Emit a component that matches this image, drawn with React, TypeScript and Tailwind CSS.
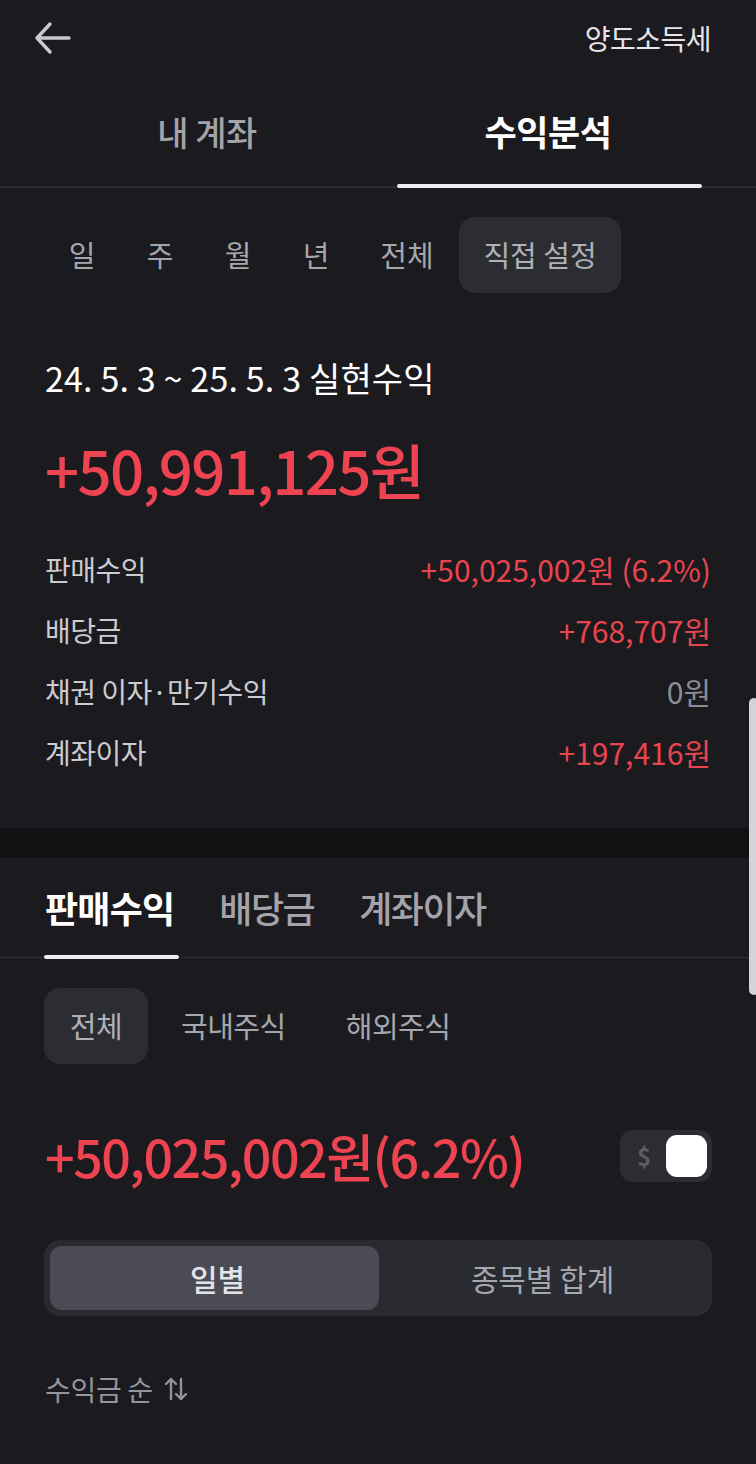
import React from "react";

const font = { fontFamily: '"Noto Sans CJK KR", "Noto Sans", sans-serif' };

export default function App() {
  return (
    <div className="relative w-[756px] h-[1464px] bg-[#1a1a1f] overflow-hidden text-white" style={font}>
      {/* header */}
      <div className="flex items-center justify-between h-[76px] pl-[33px] pr-[45px]">
        <svg width="40" height="34" viewBox="0 0 40 34" fill="none" stroke="#c9c9ce" strokeWidth="3.4" strokeLinecap="round" strokeLinejoin="round">
          <path d="M36 17H4M17 3L4 17l13 14" />
        </svg>
        <span className="text-[28px] leading-none text-[#e6e6ea] tracking-[-0.5px]">양도소득세</span>
      </div>

      {/* main tabs */}
      <div className="relative flex h-[112px] border-b-[2px] border-[#2a2a30]">
        <div className="w-1/2 flex items-center justify-center pl-[36px]">
          <span className="text-[34px] font-medium text-[#a3a3a9] tracking-[-0.5px]">내 계좌</span>
        </div>
        <div className="relative w-1/2 flex items-center justify-center pr-[38px]">
          <span className="text-[35px] font-bold text-white tracking-[-0.5px]">수익분석</span>
          <div className="absolute bottom-[-2px] left-[19px] w-[305px] h-[4px] rounded-full bg-[#ededf0]" />
        </div>
      </div>

      {/* period chips */}
      <div className="flex items-center pl-[43px] mt-[29px] h-[76px] text-[29px] text-[#a6a6ad]">
        <span className="w-[78px] text-center">일</span>
        <span className="w-[78px] text-center">주</span>
        <span className="w-[78px] text-center">월</span>
        <span className="w-[78px] text-center">년</span>
        <span className="w-[104px] text-center">전체</span>
        <span className="h-[76px] w-[162px] flex items-center justify-center rounded-[16px] bg-[#2c2c33] text-[#b0b0b7]">직접 설정</span>
      </div>

      {/* summary */}
      <div className="px-[45px] pt-[68px]">
        <div className="text-[34px] text-white tracking-[0.15px] leading-[34px]">24. 5. 3 ~ 25. 5. 3 실현수익</div>
        <div className="mt-[44px] text-[60px] font-medium text-[#ee4350] tracking-[-1.7px] leading-[60px]">+50,991,125원</div>
        <div className="mt-[52px] flex flex-col gap-[25px] leading-[36px]">
          <div className="flex justify-between items-center">
            <span className="text-[28px] text-[#cbcbd0] tracking-[-0.5px]">판매수익</span>
            <span className="text-[30px] text-[#e8454f]">+50,025,002원 (6.2%)</span>
          </div>
          <div className="flex justify-between items-center">
            <span className="text-[28px] text-[#cbcbd0] tracking-[-0.5px]">배당금</span>
            <span className="text-[30px] text-[#e8454f]">+768,707원</span>
          </div>
          <div className="flex justify-between items-center">
            <span className="text-[28px] text-[#cbcbd0] tracking-[-0.5px]">채권 이자·만기수익</span>
            <span className="text-[30px] text-[#8c8c93]">0원</span>
          </div>
          <div className="flex justify-between items-center">
            <span className="text-[28px] text-[#cbcbd0] tracking-[-0.5px]">계좌이자</span>
            <span className="text-[30px] text-[#e8454f]">+197,416원</span>
          </div>
        </div>
      </div>

      {/* divider band */}
      <div className="mt-[58px] h-[30px] bg-[#111114]" />

      {/* sub tabs */}
      <div className="relative flex items-end px-[45px] h-[100px] border-b-[1px] border-[#2e2e34] text-[36px] leading-[36px]">
        <div className="relative pb-[32px] tracking-[-0.8px]">
          <span className="font-bold text-white">판매수익</span>
          <div className="absolute bottom-[-2px] left-[-1px] right-[-5px] h-[4px] rounded-full bg-[#ededf0]" />
        </div>
        <span className="ml-[45px] pb-[32px] text-[#a3a3a9] font-medium tracking-[-1.5px]">배당금</span>
        <span className="ml-[45px] pb-[32px] text-[#a3a3a9] font-medium tracking-[-1.5px]">계좌이자</span>
      </div>

      {/* market chips */}
      <div className="flex items-center pl-[44px] mt-[30px] h-[76px] text-[29px] text-[#a6a6ad] tracking-[-0.5px]">
        <span className="h-[76px] w-[104px] flex items-center justify-center rounded-[16px] bg-[#2c2c33] text-[#b0b0b7]">전체</span>
        <span className="ml-[33px]">국내주식</span>
        <span className="ml-[60px]">해외주식</span>
      </div>

      {/* amount + toggle */}
      <div className="flex items-center justify-between pl-[45px] pr-[44px] mt-[66px] h-[52px]">
        <span className="text-[52px] font-medium text-[#ee4350] tracking-[-1.5px] leading-[52px]">+50,025,002원(6.2%)</span>
        <div className="w-[92px] h-[52px] rounded-[13px] bg-[#2c2c33] flex items-center justify-between pl-[17px] pr-[5px]">
          <span className="text-[24px] font-bold text-[#5c5c64] leading-none">$</span>
          <div className="w-[41px] h-[42px] rounded-[11px] bg-white" />
        </div>
      </div>

      {/* segmented */}
      <div className="mx-[44px] mt-[58px] h-[76px] rounded-[16px] bg-[#2a2a31] p-[6px] flex">
        <div className="w-[329px] h-full rounded-[12px] bg-[#4b4b55] flex items-center justify-center pl-[6px] text-[30px] text-[#e4e4e8] font-medium">일별</div>
        <div className="flex-1 flex items-center justify-center text-[30px] text-[#a6a6ad] tracking-[-0.3px]">종목별 합계</div>
      </div>

      {/* sort */}
      <div className="pl-[45px] mt-[59px] h-[28px] flex items-center gap-[10px] text-[28px] leading-[28px] text-[#94949b] tracking-[-0.3px]">
        <span>수익금 순</span>
        <svg width="26" height="28" viewBox="0 0 26 28" fill="none" stroke="#94949b" strokeWidth="2.4" strokeLinecap="round" strokeLinejoin="round">
          <path d="M8 24V4M3 9l5-5 5 5M18 4v20M13 19l5 5 5-5" />
        </svg>
      </div>

      {/* scroll indicator */}
      <div className="absolute left-[749px] top-[698px] w-[10px] h-[297px] rounded-[6px] bg-[#d4d4d8]" />
    </div>
  );
}
